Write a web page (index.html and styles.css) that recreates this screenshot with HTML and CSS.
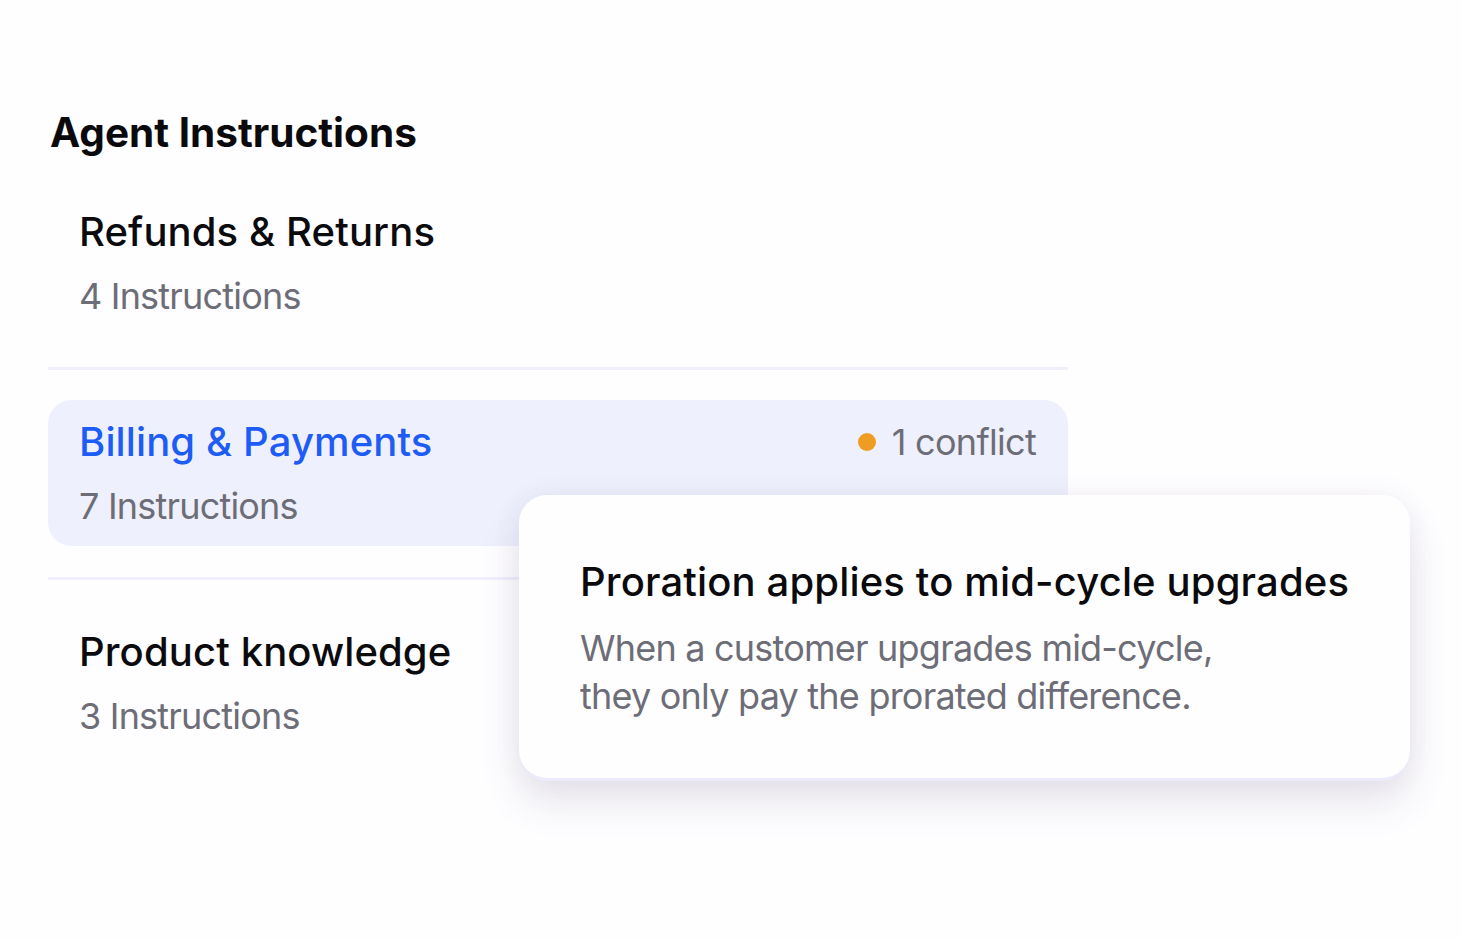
FILE: index.html
```html
<!DOCTYPE html>
<html>
<head>
<meta charset="utf-8">
<link rel="stylesheet" href="styles.css">
</head>
<body>
<div class="page">
  <h1 class="heading">Agent Instructions</h1>
  <div class="list">
    <div class="row">
      <div class="row-text">
        <div class="row-title">Refunds &amp; Returns</div>
        <div class="row-sub">4 Instructions</div>
      </div>
    </div>
    <div class="divider"></div>
    <div class="row row-active">
      <div class="row-text">
        <div class="row-title">Billing &amp; Payments</div>
        <div class="row-sub">7 Instructions</div>
      </div>
      <div class="conflict"><span class="dot"></span>1 conflict</div>
    </div>
    <div class="divider"></div>
    <div class="row">
      <div class="row-text">
        <div class="row-title">Product knowledge</div>
        <div class="row-sub">3 Instructions</div>
      </div>
    </div>
    <div class="card">
      <div class="card-title">Proration applies to mid-cycle upgrades</div>
      <div class="card-body">When a customer upgrades mid-cycle,<br>they only pay the prorated difference.</div>
    </div>
  </div>
</div>
</body>
</html>
```
FILE: styles.css
```css
html, body {
  margin: 0;
  padding: 0;
  background: #fefdff;
  font-family: "Inter", "Noto Sans", sans-serif;
  -webkit-font-smoothing: antialiased;
}
.page {
  width: 1461px;
  height: 939px;
  padding: 108px 0 0 48px;
  box-sizing: border-box;
}
.heading {
  margin: 0 0 0 2px;
  font-size: 40.5px;
  font-weight: 700;
  line-height: 50px;
  letter-spacing: 0;
  color: #0a0a0c;
}
.list {
  position: relative;
  width: 1020px;
  margin-top: 32px;
}
.row {
  display: flex;
  align-items: flex-start;
  justify-content: space-between;
  padding: 21px 32px 20px 31px;
  border-radius: 24px;
}
.row-active {
  background: #eef0fd;
}
.row-title {
  font-size: 40px;
  font-weight: 500;
  line-height: 42px;
  letter-spacing: 0.12px;
  color: #0b0b0e;
}
.row-active .row-title {
  color: #1d5cf5;
}
.row-sub {
  margin-top: 23px;
  font-size: 36px;
  font-weight: 400;
  line-height: 40px;
  letter-spacing: -0.8px;
  color: #6d6d77;
}
.conflict {
  display: flex;
  align-items: center;
  gap: 16px;
  font-size: 36px;
  line-height: 42px;
  letter-spacing: -0.7px;
  color: #6d6d77;
}
.dot {
  width: 18px;
  height: 18px;
  border-radius: 50%;
  background: #ee9c22;
}
.divider {
  height: 3px;
  background: #eff0fb;
  margin: 30.5px 0;
}
.card {
  position: absolute;
  left: 471px;
  top: 305px;
  width: 891px;
  height: 283px;
  box-sizing: border-box;
  padding: 63px 0 0 61px;
  background: #fefeff;
  border-radius: 28px;
  box-shadow: 0 3px 0 #ecebfb, 0 24px 40px rgba(60, 50, 80, 0.12), 0 0 30px rgba(80, 70, 120, 0.06);
}
.card-title {
  font-size: 40px;
  font-weight: 500;
  line-height: 48px;
  letter-spacing: 0.15px;
  color: #0a0a0c;
}
.card-body {
  margin-top: 18px;
  font-size: 36px;
  line-height: 48px;
  letter-spacing: -0.78px;
  color: #6d6d77;
}
```
